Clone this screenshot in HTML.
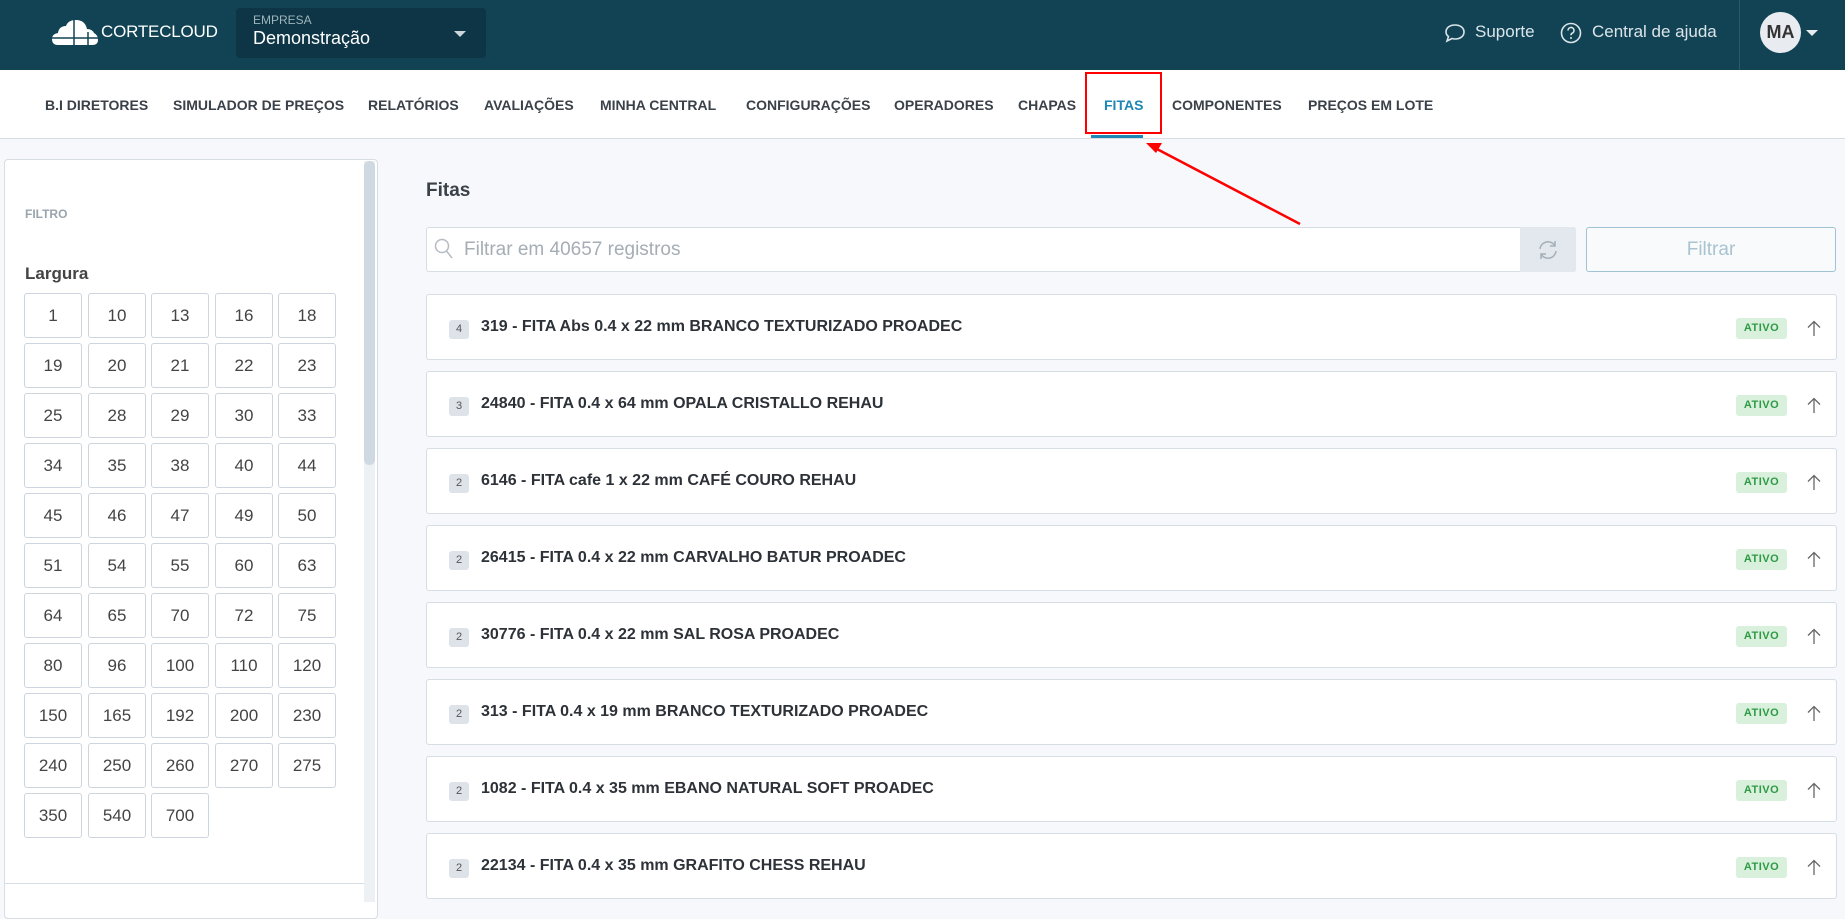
<!DOCTYPE html>
<html><head><meta charset="utf-8">
<style>
*{box-sizing:border-box;margin:0;padding:0}
body{width:1845px;height:902px;overflow:hidden;background:#f6f8fb;font-family:"Liberation Sans",Arial,sans-serif;position:relative}
.hdr{position:absolute;left:0;top:0;width:1845px;height:70px;background:#114354}
.logo{position:absolute;left:52px;top:20px}
.logotxt{position:absolute;left:101px;top:22px;color:#fff;font-size:17px;letter-spacing:-0.2px}
.emp{position:absolute;left:236px;top:8px;width:250px;height:50px;background:#0d3545;border-radius:4px}
.emp .l{position:absolute;left:17px;top:5px;font-size:12px;color:#9fb4bd}
.emp .v{position:absolute;left:17px;top:20px;font-size:18px;color:#fff}
.emp .c{position:absolute;right:20px;top:23px;width:0;height:0;border-left:6px solid transparent;border-right:6px solid transparent;border-top:6px solid #ccd6da}
.hr{position:absolute;top:22px;color:#dbe5e9;font-size:17px}
.div{position:absolute;left:1739px;top:0;width:1px;height:70px;background:#2b5a6a}
.av{position:absolute;left:1760px;top:12px;width:41px;height:41px;border-radius:50%;background:#e8ecf0;color:#333;font-weight:bold;font-size:18px;text-align:center;line-height:41px}
.avc{position:absolute;left:1806px;top:30px;border-left:6px solid transparent;border-right:6px solid transparent;border-top:6px solid #e8ecf0}
.nav{position:absolute;left:0;top:70px;width:1845px;height:69px;background:#fff;border-bottom:1px solid #d6dde3}
.nav span{position:absolute;top:27px;font-size:14px;font-weight:bold;color:#3a4148}
.side{position:absolute;left:4px;top:159px;width:374px;height:760px;background:#fff;border:1px solid #d6dde3;border-radius:4px}
.sb{position:absolute;left:364px;top:161px;width:11px;height:741px;background:#eef1f4}
.sbt{position:absolute;left:364px;top:161px;width:11px;height:304px;background:#cfd9e1;border-radius:5px}
.grid b{position:absolute;width:58px;height:45px;border:1px solid #cdd6de;border-radius:3px;font-weight:normal;font-size:17px;color:#444;text-align:center;line-height:43px}
.item{position:absolute;left:426px;width:1411px;height:66px;background:#fff;border:1px solid #d6dde3;border-radius:3px}
.item .bd{position:absolute;left:22px;top:25px;width:20px;height:19px;background:#dde3e9;border-radius:3px;font-size:11px;color:#555;text-align:center;line-height:19px}
.item .t{position:absolute;left:54px;top:23px;font-size:16px;font-weight:bold;color:#2d3238}
.item .a{position:absolute;left:1309px;top:23px;width:51px;height:21px;background:#d8f0dc;color:#2e9a45;border-radius:3px;font-size:11px;font-weight:bold;text-align:center;line-height:21px;letter-spacing:.5px}
.item svg{position:absolute;left:1379px;top:25px}
</style></head><body>
<div class="hdr">
 <svg class="logo" width="46" height="26" viewBox="0 0 46 26"><path d="M6 25 Q0 25 0 19 Q0 14 6 13 Q7 6 14 6 Q16 0 24 0 Q33 0 35 9 Q40 9 42 13 Q46 15 46 20 Q46 25 40 25 Z" fill="#fff"/><path d="M22 0V25M0 18H46M36 12V25" stroke="#114354" stroke-width="1.5"/></svg>
 <div class="logotxt">CORTECLOUD</div>
 <div class="emp"><div class="l">EMPRESA</div><div class="v">Demonstração</div><div class="c"></div></div>
 <svg style="position:absolute;left:1444px;top:23px" width="22" height="20" viewBox="0 0 22 20"><path d="M11 2C5.5 2 2 5 2 9c0 2 1 3.5 2.5 4.5L3 18l5-2.5c1 .3 2 .5 3 .5 5.5 0 9-3 9-7s-3.5-7-9-7z" fill="none" stroke="#dbe5e9" stroke-width="1.6"/></svg>
 <div class="hr" style="left:1475px">Suporte</div>
 <svg style="position:absolute;left:1560px;top:22px" width="22" height="22" viewBox="0 0 22 22"><circle cx="11" cy="11" r="9.5" fill="none" stroke="#dbe5e9" stroke-width="1.6"/><path d="M8 8.5a3 3 0 1 1 4 2.8c-.8.4-1 1-1 2" fill="none" stroke="#dbe5e9" stroke-width="1.6"/><circle cx="11" cy="16" r="1" fill="#dbe5e9"/></svg>
 <div class="hr" style="left:1592px">Central de ajuda</div>
 <div class="div"></div>
 <div class="av">MA</div><div class="avc"></div>
</div>
<div class="nav">
 <span style="left:45px">B.I DIRETORES</span>
 <span style="left:173px">SIMULADOR DE PREÇOS</span>
 <span style="left:368px">RELATÓRIOS</span>
 <span style="left:484px">AVALIAÇÕES</span>
 <span style="left:600px">MINHA CENTRAL</span>
 <span style="left:746px">CONFIGURAÇÕES</span>
 <span style="left:894px">OPERADORES</span>
 <span style="left:1018px">CHAPAS</span>
 <span style="left:1104px;color:#1e86b5">FITAS</span>
 <span style="left:1172px">COMPONENTES</span>
 <span style="left:1308px">PREÇOS EM LOTE</span>
 <div style="position:absolute;left:1091px;top:65px;width:52px;height:3px;background:#1e86b5"></div>
</div>
<div style="position:absolute;left:1085px;top:72px;width:77px;height:62px;border:2px solid #f00"></div>
<svg style="position:absolute;left:0;top:0" width="1845" height="902"><line x1="1300" y1="224" x2="1155" y2="148" stroke="#f00" stroke-width="2.5"/><path d="M1146 143 L1162 143 L1156 153 Z" fill="#f00"/></svg>
<div class="side">
 <div style="position:absolute;left:20px;top:47px;font-size:12px;font-weight:bold;color:#9aa4ad">FILTRO</div>
 <div style="position:absolute;left:20px;top:104px;font-size:17px;font-weight:bold;color:#444">Largura</div>
 <div style="position:absolute;left:0;top:723px;width:360px;height:1px;background:#d6dde3"></div>
</div>
<div class="sb"></div><div class="sbt"></div>
<div class="grid" id="g"></div>
<div style="position:absolute;left:426px;top:180px;font-size:19px;font-weight:bold;color:#3a4148">Fitas</div>
<div style="position:absolute;left:426px;top:227px;width:1150px;height:45px;background:#fff;border:1px solid #d6dde3;border-radius:3px"></div>
<svg style="position:absolute;left:434px;top:238px" width="20" height="22" viewBox="0 0 20 22"><circle cx="8" cy="8" r="6.5" fill="none" stroke="#b5bcc3" stroke-width="1.5"/><line x1="12.5" y1="13" x2="18" y2="20" stroke="#b5bcc3" stroke-width="1.5"/></svg>
<div style="position:absolute;left:464px;top:239px;font-size:19px;color:#a5adb5">Filtrar em 40657 registros</div>
<div style="position:absolute;left:1520px;top:227px;width:56px;height:45px;background:#e3e8ee;border-radius:0 3px 3px 0"></div>
<svg style="position:absolute;left:1537px;top:239px" width="22" height="22" viewBox="0 0 22 22" fill="none" stroke="#a5b0ba" stroke-width="1.5"><path d="M3 10a8 8 0 0 1 15-3M19 12a8 8 0 0 1-15 3"/><path d="M18 2v5h-5M4 20v-5h5"/></svg>
<div style="position:absolute;left:1586px;top:227px;width:250px;height:45px;border:1px solid #9fc3d3;border-radius:3px;background:#f8fafc;text-align:center;line-height:43px;font-size:19px;color:#a9c4d0">Filtrar</div>
<div id="list"></div>
<script>
var v=[1,10,13,16,18,19,20,21,22,23,25,28,29,30,33,34,35,38,40,44,45,46,47,49,50,51,54,55,60,63,64,65,70,72,75,80,96,100,110,120,150,165,192,200,230,240,250,260,270,275,350,540,700],h='';
v.forEach(function(n,i){h+='<b style="left:'+(24+Math.round((i%5)*63.5))+'px;top:'+(293+Math.floor(i/5)*50)+'px">'+n+'</b>'});
document.getElementById('g').innerHTML=h;
var it=[[4,'319 - FITA Abs 0.4 x 22 mm BRANCO TEXTURIZADO PROADEC'],[3,'24840 - FITA 0.4 x 64 mm OPALA CRISTALLO REHAU'],[2,'6146 - FITA cafe 1 x 22 mm CAFÉ COURO REHAU'],[2,'26415 - FITA 0.4 x 22 mm CARVALHO BATUR PROADEC'],[2,'30776 - FITA 0.4 x 22 mm SAL ROSA PROADEC'],[2,'313 - FITA 0.4 x 19 mm BRANCO TEXTURIZADO PROADEC'],[2,'1082 - FITA 0.4 x 35 mm EBANO NATURAL SOFT PROADEC'],[2,'22134 - FITA 0.4 x 35 mm GRAFITO CHESS REHAU']];
h='';it.forEach(function(x,i){h+='<div class="item" style="top:'+(294+i*77)+'px"><div class="bd">'+x[0]+'</div><div class="t">'+x[1]+'</div><div class="a">ATIVO</div><svg width="16" height="17" viewBox="0 0 16 17" fill="none" stroke="#666" stroke-width="1.3"><path d="M8 1.5V16M2 7.5L8 1.5L14 7.5"/></svg></div>'});
document.getElementById('list').innerHTML=h;
</script>
</body></html>
